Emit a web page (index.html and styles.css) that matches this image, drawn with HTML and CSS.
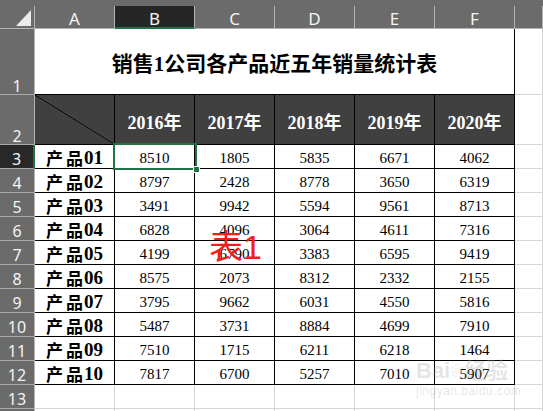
FILE: index.html
```html
<!DOCTYPE html>
<html lang="zh-CN">
<head>
<meta charset="utf-8">
<title>销量统计表</title>
<link rel="stylesheet" href="styles.css">
</head>
<body>
<div class="sheet">
  <div class="corner"><svg class="tri" width="17" height="18" viewBox="0 0 17 18"><polygon points="1,17 16,17 16,1" fill="#ececec"/></svg></div>
  <div class="ch">A</div><div class="ch sel">B</div><div class="ch">C</div><div class="ch">D</div><div class="ch">E</div><div class="ch">F</div><div class="ch">&nbsp;</div>

  <div class="rh tall">1</div>
  <div class="title">销售1公司各产品近五年销量统计表</div>
  <div class="cell"></div>

  <div class="rh tall">2</div>
  <div class="hd diag"></div>
  <div class="hd">2016年</div><div class="hd">2017年</div><div class="hd">2018年</div><div class="hd">2019年</div><div class="hd">2020年</div>
  <div class="cell"></div>

  <div class="rh sel">3</div><div class="td name"><span class="cjk">产品</span>01</div><div class="td num active">8510<span class="selbox"><span class="handle"></span></span></div><div class="td num">1805</div><div class="td num">5835</div><div class="td num">6671</div><div class="td num">4062</div><div class="cell"></div>
  <div class="rh">4</div><div class="td name"><span class="cjk">产品</span>02</div><div class="td num">8797</div><div class="td num">2428</div><div class="td num">8778</div><div class="td num">3650</div><div class="td num">6319</div><div class="cell"></div>
  <div class="rh">5</div><div class="td name"><span class="cjk">产品</span>03</div><div class="td num">3491</div><div class="td num">9942</div><div class="td num">5594</div><div class="td num">9561</div><div class="td num">8713</div><div class="cell"></div>
  <div class="rh">6</div><div class="td name"><span class="cjk">产品</span>04</div><div class="td num">6828</div><div class="td num">4096</div><div class="td num">3064</div><div class="td num">4611</div><div class="td num">7316</div><div class="cell"></div>
  <div class="rh">7</div><div class="td name"><span class="cjk">产品</span>05</div><div class="td num">4199</div><div class="td num">6790</div><div class="td num">3383</div><div class="td num">6595</div><div class="td num">9419</div><div class="cell"></div>
  <div class="rh">8</div><div class="td name"><span class="cjk">产品</span>06</div><div class="td num">8575</div><div class="td num">2073</div><div class="td num">8312</div><div class="td num">2332</div><div class="td num">2155</div><div class="cell"></div>
  <div class="rh">9</div><div class="td name"><span class="cjk">产品</span>07</div><div class="td num">3795</div><div class="td num">9662</div><div class="td num">6031</div><div class="td num">4550</div><div class="td num">5816</div><div class="cell"></div>
  <div class="rh">10</div><div class="td name"><span class="cjk">产品</span>08</div><div class="td num">5487</div><div class="td num">3731</div><div class="td num">8884</div><div class="td num">4699</div><div class="td num">7910</div><div class="cell"></div>
  <div class="rh">11</div><div class="td name"><span class="cjk">产品</span>09</div><div class="td num">7510</div><div class="td num">1715</div><div class="td num">6211</div><div class="td num">6218</div><div class="td num">1464</div><div class="cell"></div>
  <div class="rh">12</div><div class="td name"><span class="cjk">产品</span>10</div><div class="td num">7817</div><div class="td num">6700</div><div class="td num">5257</div><div class="td num">7010</div><div class="td num">5907</div><div class="cell"></div>

  <div class="rh">13</div><div class="cell"></div><div class="cell"></div><div class="cell"></div><div class="cell"></div><div class="cell"></div><div class="cell"></div><div class="cell"></div>
  <div class="rh"></div><div class="cell"></div><div class="cell"></div><div class="cell"></div><div class="cell"></div><div class="cell"></div><div class="cell"></div><div class="cell"></div>

  <div class="stamp">表1</div>
  <div class="wm"><span class="wm-logo">Bai<span class="paw">❀</span>经验</span><span class="wm-url">jingyan.baidu.com</span></div>
</div>
</body>
</html>
```

FILE: styles.css
```css
html, body {
  margin: 0;
  padding: 0;
  background: #fff;
  overflow: hidden;
}

.sheet {
  position: relative;
  width: 543px;
  height: 411px;
  display: grid;
  grid-template-columns: 35px repeat(6, 80px) 1fr;
  grid-template-rows: 29px 66px 50px repeat(11, 24px) 1fr;
  background: linear-gradient(#6b6b6b 0 6px, #fff 6px 100%);
  overflow: hidden;
}

.sheet > div {
  box-sizing: border-box;
  min-width: 0;
  min-height: 0;
}

/* column headers */
.corner {
  margin-top: 6px;
  background: #6b6b6b;
  border-right: 1px solid #b4b4b4;
  border-bottom: 1px solid #b4b4b4;
  position: relative;
}
.tri {
  position: absolute;
  left: 15px;
  top: 3px;
  display: block;
}
.ch {
  margin-top: 6px;
  background: #6b6b6b;
  border-right: 1px solid #b4b4b4;
  border-bottom: 1px solid #b4b4b4;
  color: #f4f4f4;
  font-family: "Noto Sans", "Open Sans", sans-serif;
  font-size: 17px;
  line-height: 1;
  display: flex;
  justify-content: center;
  align-items: center;
  padding-top: 3px;
}
.ch.sel {
  background: #262626;
  border-bottom: 2px solid #217346;
}

/* row headers */
.rh {
  background: #6b6b6b;
  border-right: 1px solid #b4b4b4;
  border-bottom: 1px solid #a8a8a8;
  color: #f4f4f4;
  font-family: "Noto Sans", "Open Sans", sans-serif;
  font-size: 16px;
  line-height: 1;
  display: flex;
  justify-content: center;
  align-items: center;
  padding-top: 4px;
}
.rh.tall {
  align-items: flex-end;
  padding-top: 0;
  padding-bottom: 0;
}
.rh.sel {
  background: #282828;
  border-right: 2px solid #217346;
}

/* plain cells */
.cell {
  border-right: 1px solid #d6d6d6;
  border-bottom: 1px solid #d6d6d6;
}

/* title */
.title {
  grid-column: 2 / span 6;
  border-right: 1px solid #000;
  border-bottom: 1px solid #000;
  display: flex;
  justify-content: center;
  align-items: center;
  font-family: "Liberation Serif", "Noto Sans CJK SC", serif;
  font-weight: bold;
  font-size: 21px;
  color: #000;
}

/* header row */
.hd {
  background: #404040;
  border-right: 1px solid #000;
  border-bottom: 1px solid #000;
  color: #fff;
  font-family: "Liberation Serif", "Noto Sans CJK SC", serif;
  font-weight: bold;
  font-size: 18px;
  display: flex;
  justify-content: center;
  align-items: center;
  padding-top: 3px;
}
.hd.diag {
  background:
    linear-gradient(to top right, transparent calc(50% - 0.7px), #000 50%, transparent calc(50% + 0.7px)),
    #404040;
}

/* data cells */
.td {
  border-right: 1px solid #000;
  border-bottom: 1px solid #000;
  display: flex;
  justify-content: center;
  align-items: center;
  color: #000;
}
.name {
  font-family: "Liberation Serif", "Noto Sans CJK SC", serif;
  font-weight: bold;
  font-size: 19px;
  padding-top: 2px;
}
.cjk {
  font-size: 17px;
  letter-spacing: 3px;
  margin-right: -2px;
}
.num {
  font-family: "Liberation Serif", serif;
  font-size: 15px;
  padding-top: 4px;
}
.active {
  position: relative;
}
.selbox {
  position: absolute;
  left: -2px;
  top: -2px;
  right: -3px;
  bottom: -2px;
  border: 2px solid #217346;
}
.handle {
  position: absolute;
  right: -5px;
  bottom: -5px;
  width: 5px;
  height: 5px;
  background: #217346;
  border: 1px solid #fff;
}

/* overlays */
.stamp {
  position: absolute;
  left: 209px;
  top: 230px;
  font-family: "Liberation Sans", "Noto Sans CJK SC", sans-serif;
  font-size: 34px;
  line-height: 1;
  color: #f41c1c;
}
.wm {
  position: absolute;
  left: 416px;
  top: 358px;
  display: flex;
  flex-direction: column;
  align-items: flex-start;
  color: rgba(160, 160, 160, 0.28);
  font-family: "Liberation Sans", "Noto Sans CJK SC", sans-serif;
}
.wm-logo {
  font-size: 22px;
  font-weight: bold;
  line-height: 26px;
}
.paw {
  font-size: 14px;
  vertical-align: top;
}
.wm-url {
  font-size: 12px;
  line-height: 14px;
  letter-spacing: 0.5px;
}
```
